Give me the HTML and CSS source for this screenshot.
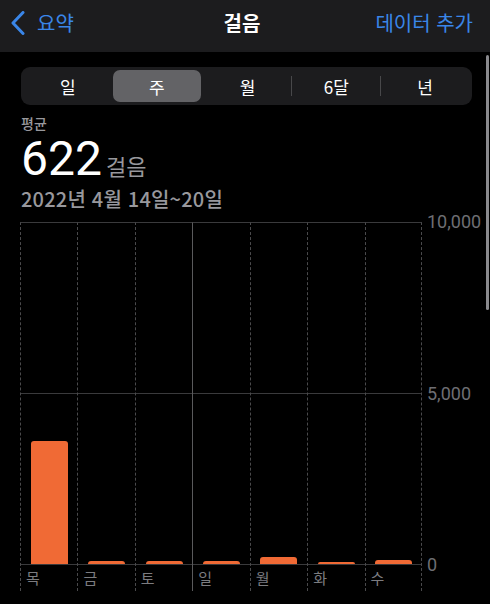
FILE: index.html
```html
<!DOCTYPE html>
<html lang="ko">
<head>
<meta charset="utf-8">
<link rel="stylesheet" href="styles.css">
</head>
<body>
<div class="screen">
  <header class="nav">
    <div class="nav-left">
      <svg class="chev" width="14" height="24" viewBox="0 0 14 24"><path d="M12 1.5 L2 12 L12 22.5" fill="none" stroke="#3a86e8" stroke-width="3" stroke-linecap="round" stroke-linejoin="round"/></svg>
      <span class="nav-link">요약</span>
    </div>
    <div class="nav-title">걸음</div>
    <div class="nav-right"><span class="nav-link">데이터 추가</span></div>
  </header>

  <div class="seg">
    <div class="seg-item">일</div>
    <div class="seg-div hidden"></div>
    <div class="seg-item active">주</div>
    <div class="seg-div hidden"></div>
    <div class="seg-item">월</div>
    <div class="seg-div"></div>
    <div class="seg-item">6달</div>
    <div class="seg-div"></div>
    <div class="seg-item">년</div>
  </div>

  <div class="stats">
    <div class="stat-label">평균</div>
    <div class="stat-value"><span class="num">622</span><span class="unit">걸음</span></div>
    <div class="stat-date">2022년 4월 14일~20일</div>
  </div>

  <div class="chart">
    <div class="plot">
      <div class="col"><div class="cell-top"></div><div class="cell-bot"><div class="bar" style="height:123px"></div></div><div class="day">목</div></div>
      <div class="col"><div class="cell-top"></div><div class="cell-bot"><div class="bar" style="height:3px"></div></div><div class="day">금</div></div>
      <div class="col"><div class="cell-top"></div><div class="cell-bot"><div class="bar" style="height:3px"></div></div><div class="day">토</div></div>
      <div class="col solid"><div class="cell-top"></div><div class="cell-bot"><div class="bar" style="height:3px"></div></div><div class="day">일</div></div>
      <div class="col"><div class="cell-top"></div><div class="cell-bot"><div class="bar" style="height:7px"></div></div><div class="day">월</div></div>
      <div class="col"><div class="cell-top"></div><div class="cell-bot"><div class="bar" style="height:2px"></div></div><div class="day">화</div></div>
      <div class="col last"><div class="cell-top"></div><div class="cell-bot"><div class="bar" style="height:4px"></div></div><div class="day">수</div></div>
    </div>
    <div class="yaxis">
      <span>10,000</span>
      <span>5,000</span>
      <span>0</span>
    </div>
  </div>

  <div class="scroll-ind"></div>
</div>
</body>
</html>
```

FILE: styles.css
```css
* { box-sizing: border-box; }
html, body { margin: 0; padding: 0; background: #000; }
body {
  width: 490px;
  height: 604px;
  overflow: hidden;
  font-family: "Noto Sans CJK KR", "Inter", sans-serif;
  color: #fff;
}
.screen { position: relative; width: 490px; height: 604px; }

.nav {
  height: 52px;
  background: #1c1c1e;
  display: grid;
  grid-template-columns: 1fr auto 1fr;
  align-items: center;
  padding: 0 17px 6px 11px;
}
.nav-left { display: flex; align-items: center; gap: 12px; }
.chev { display: block; }
.nav-link { color: #3a86e8; font-size: 20px; line-height: 24px; }
.nav-title { font-size: 20px; font-weight: 700; line-height: 24px; text-align: center; }
.nav-right { display: flex; justify-content: flex-end; }

.seg {
  margin: 15px 18px 0 21px;
  height: 38px;
  background: #1c1c1e;
  border-radius: 9px;
  padding: 3px;
  display: flex;
  align-items: center;
}
.seg-item {
  flex: 1;
  height: 32px;
  display: flex;
  align-items: center;
  justify-content: center;
  font-size: 17px;
  font-weight: 400;
  color: #fff;
  border-radius: 7px;
}
.seg-item.active { background: #636366; margin: 0 2px 0 0; }
.seg-div { width: 1px; height: 20px; background: #48484a; }
.seg-div.hidden { background: transparent; }

.stats { padding-left: 21px; }
.stat-label {
  margin-top: 9px;
  font-size: 14px;
  line-height: 18px;
  font-weight: 500;
  color: #98989d;
}
.stat-value {
  margin-top: 7px;
  height: 40px;
  line-height: 40px;
  display: flex;
  align-items: baseline;
}
.num { font-family: "Roboto", "Inter", sans-serif; font-size: 48px; line-height: 40px; font-weight: 400; color: #fff; }
.unit { font-size: 22px; line-height: 22px; color: #98989d; margin-left: 4px; }
.stat-date {
  margin-top: 8px;
  font-size: 20px;
  line-height: 24px;
  letter-spacing: 0.2px;
  font-weight: 500;
  color: #98989d;
}

.chart {
  margin-top: 11px;
  padding-left: 20px;
  display: flex;
  align-items: flex-start;
}
.plot {
  width: 402px;
  display: grid;
  grid-template-columns: repeat(7, 1fr);
}
.col {
  display: flex;
  flex-direction: column;
  border-left: 1px dashed #4a4a4c;
  border-top: 1px solid #3a3a3c;
}
.col.solid { border-left: 1px solid #5a5a5c; }
.col.last { border-right: 1px dashed #4a4a4c; }
.cell-top { height: 171px; border-bottom: 1px solid #3a3a3c; }
.cell-bot {
  height: 171px;
  border-bottom: 1px solid #3a3a3c;
  display: flex;
  align-items: flex-end;
  justify-content: center;
}
.bar {
  width: 37px;
  background: #f06a35;
  border-radius: 3px 3px 0 0;
}
.day {
  height: 26px;
  padding: 4px 0 0 5px;
  font-size: 15px;
  line-height: 18px;
  color: #7c7c80;
}
.yaxis {
  margin-left: 5px;
  margin-top: -9px;
  height: 361px;
  display: flex;
  flex-direction: column;
  justify-content: space-between;
  font-family: "Roboto", "Inter", sans-serif;
  font-size: 18px;
  line-height: 18px;
  color: #6e6e73;
}

.scroll-ind {
  position: absolute;
  right: 1px;
  top: 55px;
  width: 3px;
  height: 255px;
  border-radius: 2px;
  background: #8a8a8e;
}
```
